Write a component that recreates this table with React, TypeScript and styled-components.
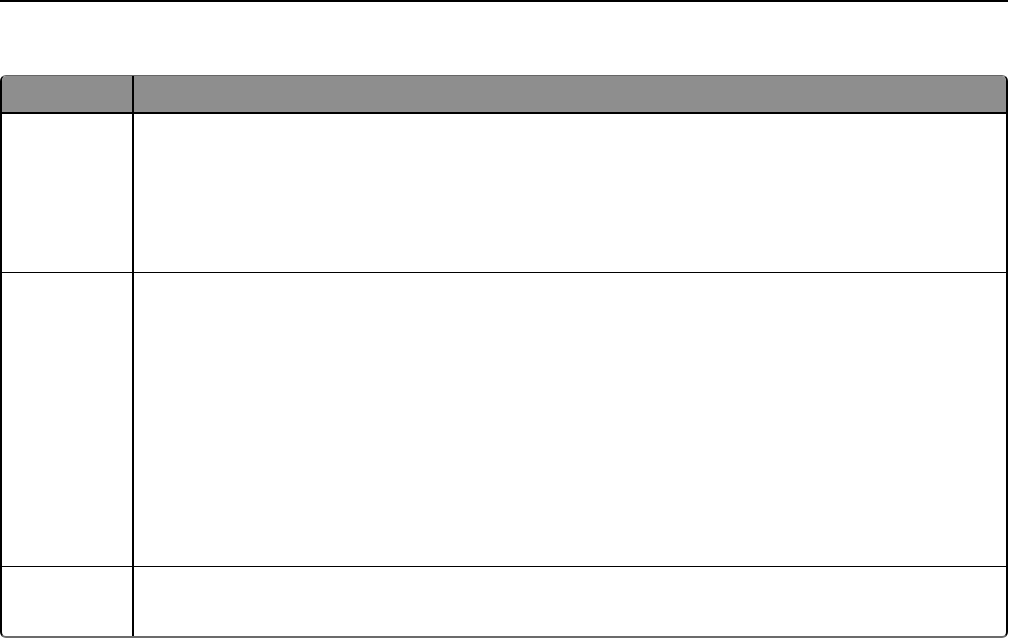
import React from "react";
import styled, { createGlobalStyle } from "styled-components";

const GlobalStyle = createGlobalStyle`
    html, body {
        margin: 0;
        padding: 0;
        background: #fff;
        font-family: "Liberation Sans", Arial, sans-serif;
    }
`;

const rows = [
    { id: "r1", height: 159 },
    { id: "r2", height: 294 },
    { id: "r3", height: 69, last: true },
];

const App: React.FC = () => {
    return (
        <Page>
            <GlobalStyle />
            <Rule />
            <Table>
                <HeadRow>
                    <HeadCell $first />
                    <HeadCell />
                </HeadRow>
                {rows.map((r) => (
                    <Row key={r.id} $h={r.height} $last={r.last}>
                        <Cell $first />
                        <Cell />
                    </Row>
                ))}
            </Table>
        </Page>
    );
};

const Page = styled.div`
    width: 1010px;
    height: 639px;
    overflow: hidden;
`;

const Rule = styled.div`
    width: 1008px;
    height: 2px;
    background: #000;
`;

const Table = styled.div`
    box-sizing: border-box;
    margin-top: 73px;
    width: 1008px;
    border-top: 1px solid #666;
    border-bottom: 2px solid #6b6b6b;
    border-left: 2px solid #000;
    border-right: 2px solid #000;
    border-radius: 6px;
    overflow: hidden;
`;

const HeadRow = styled.div`
    display: grid;
    grid-template-columns: 132px 1fr;
    height: 38px;
    background: #8e8e8e;
    border-bottom: 2px solid #000;
    box-sizing: border-box;
`;

const HeadCell = styled.div<{ $first?: boolean }>`
    box-sizing: border-box;
    border-right: ${(p) => (p.$first ? "2px solid #000" : "none")};
`;

const Row = styled.div<{ $h: number; $last?: boolean }>`
    display: grid;
    grid-template-columns: 132px 1fr;
    height: ${(p) => p.$h}px;
    box-sizing: border-box;
    border-bottom: ${(p) => (p.$last ? "none" : "1px solid #000")};
`;

const Cell = styled.div<{ $first?: boolean }>`
    box-sizing: border-box;
    border-right: ${(p) => (p.$first ? "2px solid #000" : "none")};
`;

export default App;
